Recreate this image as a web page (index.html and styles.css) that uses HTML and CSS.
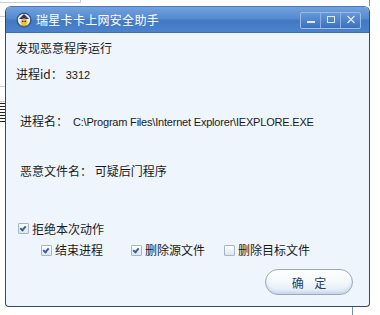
FILE: index.html
```html
<!DOCTYPE html>
<html lang="zh-CN">
<head>
  <meta charset="UTF-8">
  <title>瑞星卡卡上网安全助手</title>
  <link rel="stylesheet" href="styles.css">
</head>
<body>
  <div class="desktop">
    <div class="window">
      <div class="titlebar">
        <div class="app-icon">
          <svg width="16" height="16" viewBox="0 0 16 16">
            <circle cx="8" cy="8" r="7.5" fill="#2a4f86"/>
            <circle cx="8" cy="8" r="6.2" fill="#e9eef5"/>
            <path d="M3 7 L8 2 L13 7 Z" fill="#3a2f6e"/>
            <circle cx="8" cy="10" r="3.4" fill="#f2c230"/>
            <circle cx="6.8" cy="9.4" r="0.8" fill="#333"/>
            <circle cx="9.2" cy="9.4" r="0.8" fill="#333"/>
            <path d="M4 13 Q8 15 12 13" stroke="#7a9a3a" stroke-width="1.2" fill="none"/>
          </svg>
        </div>
        <span class="title">瑞星卡卡上网安全助手</span>
        <div class="win-buttons">
          <span class="wbtn"><svg width="18" height="14" viewBox="0 0 18 14"><rect x="5" y="8" width="8" height="2" fill="#dfe9f7"/></svg></span>
          <span class="wbtn"><svg width="18" height="14" viewBox="0 0 18 14"><rect x="5.5" y="3.5" width="7" height="6" fill="none" stroke="#dfe9f7"/></svg></span>
          <span class="wbtn"><svg width="18" height="14" viewBox="0 0 18 14"><path d="M5.5 3 L12.5 10 M12.5 3 L5.5 10" stroke="#dfe9f7" stroke-width="1.3"/></svg></span>
        </div>
      </div>

      <div class="content">
        <p class="line first">发现恶意程序运行</p>
        <p class="line">进程id：<span class="latin">3312</span></p>
        <p class="line indent gap-lg">进程名：<span class="latin path">C:\Program Files\Internet Explorer\IEXPLORE.EXE</span></p>
        <p class="line indent gap-xl">恶意文件名： 可疑后门程序</p>

        <div class="options">
          <label class="check">
            <span class="box checked"></span>拒绝本次动作
          </label>
          <div class="sub-options">
            <label class="check w-end">
              <span class="box checked"></span>结束进程
            </label>
            <label class="check w-del">
              <span class="box checked"></span>删除源文件
            </label>
            <label class="check">
              <span class="box"></span>删除目标文件
            </label>
          </div>
        </div>

        <div class="actions">
          <button class="ok">确 定</button>
        </div>
      </div>
    </div>
  </div>
</body>
</html>
```

FILE: styles.css
```css
body {
    margin: 0;
    background: #ffffff;
    font-family: 'Noto Sans CJK SC', 'Liberation Sans', sans-serif;
    font-size: 12px;
    color: #1a1a1a;
}

.desktop {
    width: 380px;
    height: 315px;
    overflow: hidden;
    padding: 6px 0 0 5px;
    box-sizing: border-box;
    background:
        linear-gradient(#c9ced6, #c9ced6) 0 2px / 80px 1px no-repeat,
        linear-gradient(#c9ced6, #c9ced6) 80px 0 / 1px 3px no-repeat,
        linear-gradient(#c9ced6, #c9ced6) 0 16px / 5px 1px no-repeat,
        linear-gradient(#c9ced6, #c9ced6) 0 86px / 5px 1px no-repeat,
        linear-gradient(#c9ced6, #c9ced6) 0 101px / 5px 1px no-repeat,
        repeating-linear-gradient(#222 0 1px, #fff 1px 3px) 0 103px / 5px 20px no-repeat,
        linear-gradient(#6f8fb8, #6f8fb8) 369px 0 / 1px 6px no-repeat,
        linear-gradient(#6f8fb8, #6f8fb8) 352px 307px / 1px 8px no-repeat,
        #ffffff;
}

.window {
    width: 365px;
    height: 301px;
    box-sizing: border-box;
    border: 1px solid #3a4a5e;
    border-top-color: #4a78b8;
    border-radius: 6px 6px 4px 4px;
    background: #eef5fd;
    overflow: hidden;
    display: flex;
    flex-direction: column;
}

.titlebar {
    height: 25px;
    flex: none;
    display: flex;
    align-items: center;
    padding: 0 8px 0 10px;
    background: linear-gradient(#72a2de 0%, #558bd0 45%, #4279c4 55%, #4c82ca 100%);
    border-bottom: 1px solid #3f6fae;
}

.app-icon {
    width: 16px;
    height: 16px;
    margin-right: 4px;
}

.title {
    color: #ffffff;
    font-size: 12px;
    letter-spacing: 0.3px;
    flex: 1;
}

.win-buttons {
    display: flex;
    border: 1px solid #9dbbe3;
    border-radius: 2px;
    background: linear-gradient(#6497da, #3a70bf);
    margin-top: 1px;
}

.wbtn {
    width: 19px;
    height: 15px;
    display: flex;
    align-items: center;
    justify-content: center;
    border-left: 1px solid #8fb0dd;
}

.wbtn:first-child {
    border-left: none;
}

.content {
    flex: 1;
    padding: 0 0 0 10px;
}

.line {
    margin: 0;
    line-height: 16px;
    height: 16px;
}

.line.first {
    margin-top: 7px;
}

.line + .line {
    margin-top: 10px;
}

.line.indent {
    padding-left: 4px;
}

.line.gap-lg {
    margin-top: 31px;
}

.line.gap-xl {
    margin-top: 34px;
}

.latin {
    font-family: 'Liberation Sans', sans-serif;
    font-size: 11px;
    margin-left: 3px;
}

.path {
    letter-spacing: -0.2px;
    margin-left: 5px;
}

.options {
    margin-top: 41px;
    padding-left: 2px;
}

.check {
    display: inline-flex;
    align-items: center;
    height: 16px;
    line-height: 16px;
}

.sub-options {
    display: flex;
    padding-left: 23px;
    margin-top: 5px;
}

.w-end {
    width: 90px;
}

.w-del {
    width: 93px;
}

.box {
    width: 9px;
    height: 9px;
    border: 1px solid #a6b5c8;
    border-radius: 1px;
    background: linear-gradient(#ffffff, #dde5f0);
    margin-right: 3px;
    position: relative;
}

.box.checked::after {
    content: "";
    position: absolute;
    left: 2px;
    top: 1px;
    width: 2px;
    height: 4px;
    border: solid #3a5f9c;
    border-width: 0 2px 2px 0;
    transform: rotate(40deg);
}

.actions {
    display: flex;
    justify-content: flex-end;
    padding-right: 16px;
    margin-top: 11px;
}

.ok {
    width: 88px;
    height: 26px;
    border: 1px solid #9aaabb;
    border-radius: 13px;
    background: linear-gradient(#ffffff 0%, #f4f8fc 50%, #dde8f4 100%);
    font-family: 'Noto Sans CJK SC', sans-serif;
    font-size: 12px;
    color: #2a3f5f;
    letter-spacing: 4px;
    padding: 0 0 0 4px;
    box-shadow: inset 0 -2px 3px rgba(150, 175, 210, 0.35);
}
```
